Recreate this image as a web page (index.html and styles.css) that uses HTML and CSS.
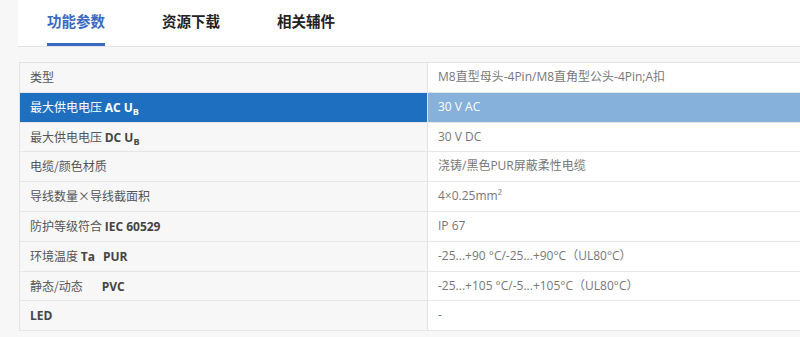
FILE: index.html
```html
<!DOCTYPE html>
<html lang="zh-CN">
<head>
<meta charset="utf-8">
<link rel="stylesheet" href="styles.css">
</head>
<body>
<div class="tabs">
  <div class="tab active">功能参数</div>
  <div class="tab">资源下载</div>
  <div class="tab">相关辅件</div>
</div>
<div class="spec">
  <div class="row"><div class="k">类型</div><div class="v">M8直型母头-4Pin/M8直角型公头-4Pin;A扣</div></div>
  <div class="row hl"><div class="k">最大供电电压 <b>AC U<sub>B</sub></b></div><div class="v">30 V AC</div></div>
  <div class="row"><div class="k">最大供电电压 <b>DC U<sub>B</sub></b></div><div class="v">30 V DC</div></div>
  <div class="row"><div class="k">电缆/颜色材质</div><div class="v">浇铸/黑色PUR屏蔽柔性电缆</div></div>
  <div class="row"><div class="k">导线数量×导线截面积</div><div class="v">4×0.25mm²</div></div>
  <div class="row"><div class="k">防护等级符合 <b>IEC 60529</b></div><div class="v">IP 67</div></div>
  <div class="row"><div class="k">环境温度 <b>Ta</b><span class="sp"></span><b>PUR</b></div><div class="v">-25...+90 °C/-25...+90°C（UL80°C）</div></div>
  <div class="row"><div class="k">静态/动态<span class="sp2"></span><b>PVC</b></div><div class="v">-25...+105 °C/-5...+105°C（UL80°C）</div></div>
  <div class="row"><div class="k"><b>LED</b></div><div class="v">-</div></div>
</div>
</body>
</html>
```
FILE: styles.css
```css
html, body {
  margin: 0;
  padding: 0;
  overflow: hidden;
}
body {
  background: #f7f7f7;
  font-family: "Open Sans", "Noto Sans CJK SC", sans-serif;
  width: 800px;
  height: 337px;
}
.tabs {
  margin-left: 18px;
  height: 46px;
  background: #fff;
  border-bottom: 1px solid #e2e2e2;
  display: flex;
  gap: 57px;
  padding-left: 29px;
}
.tab {
  font-family: "Noto Sans CJK SC", sans-serif;
  font-size: 14.5px;
  font-weight: 700;
  color: #222;
  height: 46px;
  line-height: 42px;
  box-sizing: border-box;
}
.tab.active {
  color: #3a6abf;
  border-bottom: 3px solid #3a6abf;
}
.spec {
  margin: 15px 0 0 19px;
  width: 800px;
  border-top: 1px solid #e3e3e3;
  border-left: 1px solid #e3e3e3;
  background: #fff;
}
.row {
  display: grid;
  grid-template-columns: 408px 1fr;
  height: 29.8px;
  border-bottom: 1px solid #e6e6e6;
  box-sizing: border-box;
  font-size: 12px;
}
.k, .v {
  padding-left: 10px;
  line-height: 28.8px;
  white-space: nowrap;
  overflow: hidden;
}
.k {
  background: #f7f7f7;
  color: #555;
  border-right: 1px solid #e3e3e3;
  font-family: "Noto Sans CJK SC", sans-serif;
}
.k b {
  font-family: "Open Sans", "Noto Sans CJK SC", sans-serif;
  font-weight: 700;
  color: #444;
}
.k sub {
  font-size: 9px;
  vertical-align: -3px;
  line-height: 0;
}
.v {
  color: #777;
  background: #fff;
}
.row.hl .k {
  background: #1f6fc0;
  color: #fff;
}
.row.hl .k b { color: #fff; }
.row.hl .v {
  background: #86b1da;
  color: #fff;
}
.sp { display: inline-block; width: 8px; }
.sp2 { display: inline-block; width: 19px; }
```
